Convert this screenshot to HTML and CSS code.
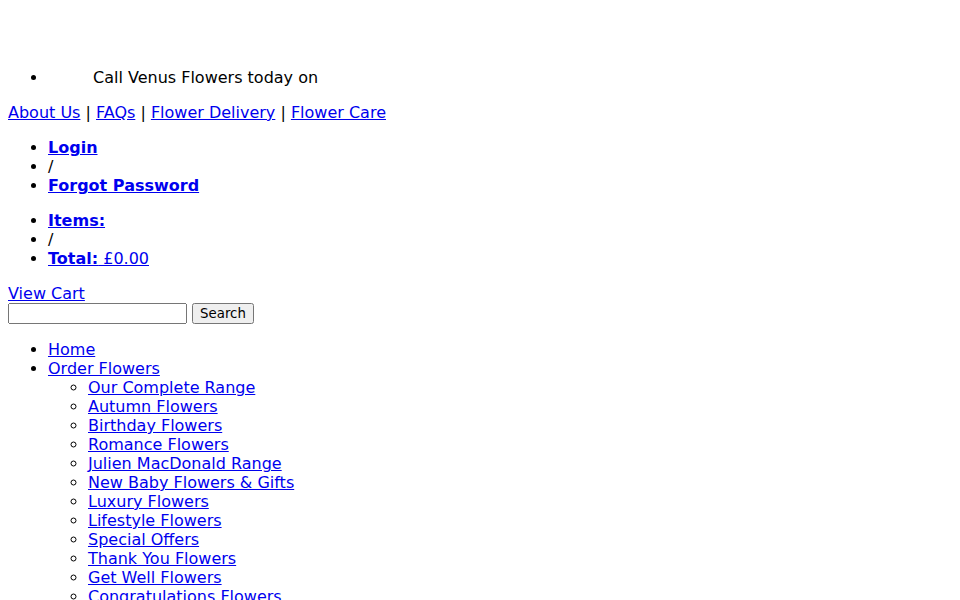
FILE: index.html
```html
<!DOCTYPE html>
<html>
<head>
<meta charset="utf-8">
<title>Venus Flowers</title>
<link rel="stylesheet" href="styles.css">
</head>
<body>
<ul class="call">
  <li><span class="logo-space"></span>Call Venus Flowers today on</li>
</ul>
<p><a href="#">About Us</a> | <a href="#">FAQs</a> | <a href="#">Flower Delivery</a> | <a href="#">Flower Care</a></p>
<ul>
  <li><a href="#"><strong>Login</strong></a></li>
  <li>/</li>
  <li><a href="#"><strong>Forgot Password</strong></a></li>
</ul>
<ul>
  <li><a href="#"><strong>Items:</strong></a></li>
  <li>/</li>
  <li><a href="#"><strong>Total:</strong> £0.00</a></li>
</ul>
<div><a href="#">View Cart</a></div>
<form class="search"><input type="text" class="search-input"> <button type="button" class="search-btn">Search</button></form>
<ul>
  <li><a href="#">Home</a></li>
  <li><a href="#">Order Flowers</a>
    <ul>
      <li><a href="#">Our Complete Range</a></li>
      <li><a href="#">Autumn Flowers</a></li>
      <li><a href="#">Birthday Flowers</a></li>
      <li><a href="#">Romance Flowers</a></li>
      <li><a href="#">Julien MacDonald Range</a></li>
      <li><a href="#">New Baby Flowers &amp; Gifts</a></li>
      <li><a href="#">Luxury Flowers</a></li>
      <li><a href="#">Lifestyle Flowers</a></li>
      <li><a href="#">Special Offers</a></li>
      <li><a href="#">Thank You Flowers</a></li>
      <li><a href="#">Get Well Flowers</a></li>
      <li><a href="#">Congratulations Flowers</a></li>
      <li><a href="#">Sympathy Flowers</a></li>
    </ul>
  </li>
</ul>
</body>
</html>
```
FILE: styles.css
```css
body {
  font-family: "DejaVu Sans", sans-serif;
  font-size: 16px;
  color: #000;
  background: #fff;
}
a { color: #0000ee; }
.logo-space {
  display: inline-block;
  width: 45px;
  height: 59px;
}
.search { margin: 0; }
.search-input, .search-btn {
  font-family: "DejaVu Sans", sans-serif;
  font-size: 13.333px;
}
.search-input { width: 171px; }
```
